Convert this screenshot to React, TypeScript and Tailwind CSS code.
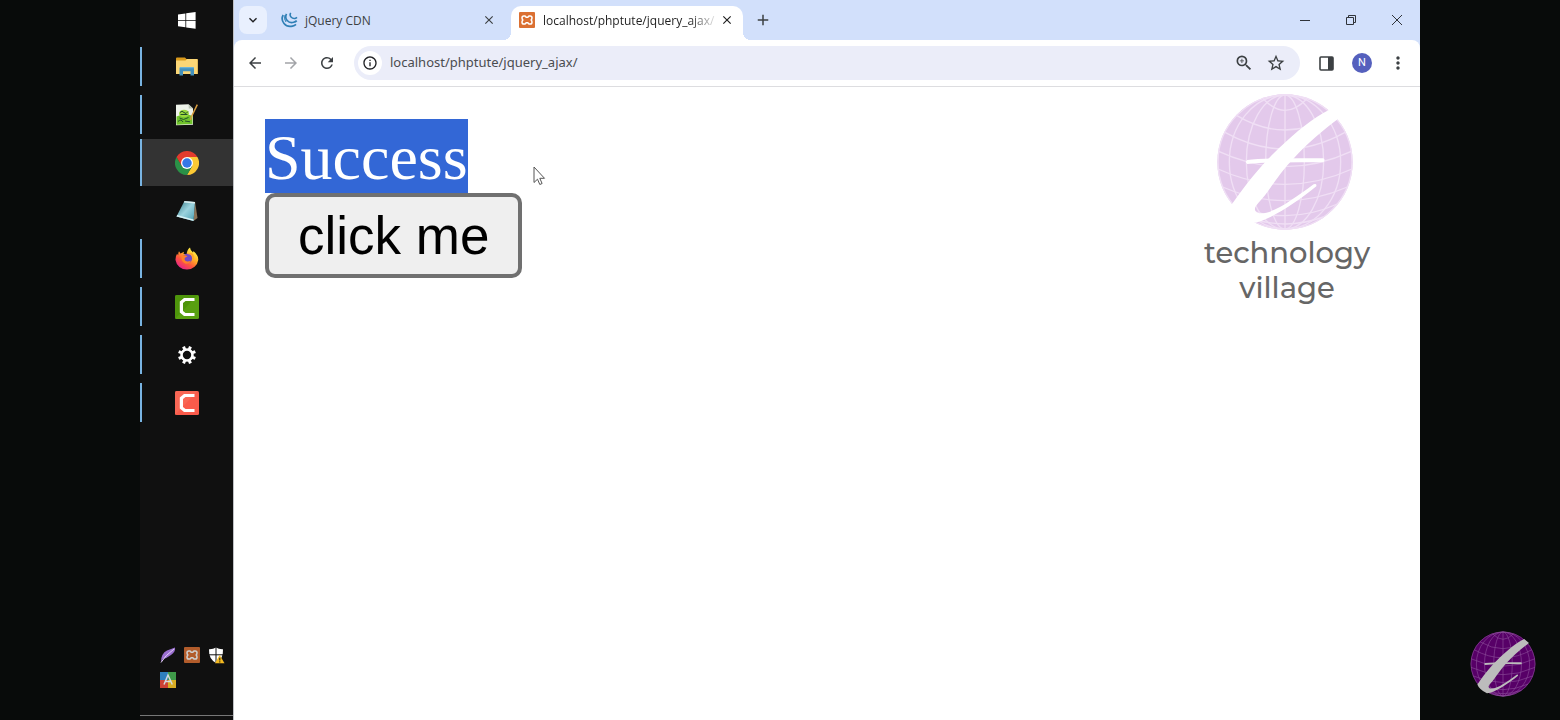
import type { ReactNode } from "react";
import {
  MdAdd,
  MdArrowBack,
  MdArrowForward,
  MdClose,
  MdInfoOutline,
  MdKeyboardArrowDown,
  MdMoreVert,
  MdRefresh,
  MdStarBorder,
  MdZoomIn,
} from "react-icons/md";

function StartIcon() {
  return (
    <svg viewBox="0 0 18 17" className="h-[17px] w-[18px]" fill="#fff">
      <path d="M0 2.4 7.4 1.4v6.5H0zM8.2 1.3 17.6 0v7.9H8.2zM0 8.8h7.4v6.5L0 14.300zM8.2 8.800h9.400V16.700L8.200 15.400z" />
    </svg>
  );
}

function FolderIcon() {
  return (
    <svg viewBox="0 0 22 19" className="h-[19px] w-[22px]">
      <path d="M0 1.500Q0 .5 1 .5h8L10.500 2H21q.7 0 .7.700V17H0z" fill="#d99a1c" />
      <path d="M0 3.500h9.500L11 2h10q.7 0 .7.700V17H0z" fill="#fbd676" />
      <path d="M3.500 18.500v-7q0-1.500 1.500-1.500h11.500q1.500 0 1.500 1.500v7h-3.500v-4.200H7v4.200z" fill="#4391bd" />
      <path d="M5 10h11.500q1.500 0 1.500 1.300H3.500Q3.600 10 5 10z" fill="#6bb3d8" />
    </svg>
  );
}

function EditorIcon() {
  return (
    <svg viewBox="0 0 23 22" className="h-[22px] w-[23px]">
      <path d="M1 .7 13.500.3 18 4.500v16.300L1 21.300z" fill="#eef3ea" />
      <path d="m13.500.3.300 4.200 4.200 0z" fill="#b9c4b4" />
      <path d="M1.500 12.500q8-3.500 16-.5v8l-16 .7z" fill="#6fc22b" />
      <ellipse cx="9" cy="9.500" rx="5" ry="3.800" fill="#9bd93f" />
      <path d="M5 8.500q2-2.500 4 0t4-1M5.500 10.500h7M4.500 14l4 1.500 5-2M3 17.500q3-3 5 .5M10 17l5 .800" fill="none" stroke="#22502a" strokeWidth="1" />
      <path d="m22.300.7-6 12.300-.8 3" fill="none" stroke="#d79c3f" strokeWidth="1.500" />
    </svg>
  );
}

function ChromeIcon() {
  return (
    <svg viewBox="0 0 48 48" className="size-6">
      <path d="M24 12h20.800A24 24 0 0 1 24 48l10.400-18z" fill="#fcc934" />
      <path d="M13.600 30 3.200 12A24 24 0 0 0 24 48l10.400-18z" fill="#2a9147" />
      <path d="M24 12h20.800A24 24 0 0 0 3.200 12l10.400 18z" fill="#e33b2e" />
      <circle cx="24" cy="24" r="12" fill="#fff" />
      <circle cx="24" cy="24" r="9.500" fill="#3478e5" />
    </svg>
  );
}

function NotepadIcon() {
  return (
    <svg viewBox="0 0 22 22" className="size-[22px]">
      <defs>
        <linearGradient id="pad" x1="0" y1="0" x2="1" y2="1">
          <stop offset="0" stopColor="#2b7482" />
          <stop offset=".5" stopColor="#9bd3de" />
          <stop offset="1" stopColor="#4ba0b4" />
        </linearGradient>
      </defs>
      <path d="m19 1.500 2.500 16.500-4 3z" fill="#8a7357" />
      <path d="M8.500 1 19 2l-1.500 19L.5 16.500z" fill="url(#pad)" />
      <path d="M8.500 1 19 2v1.500L7.800 2.500z" fill="#dceef0" />
      <path d="M.5 16.500 17.500 21l.2-1.500L1.200 15z" fill="#d5f1f5" />
    </svg>
  );
}

function FirefoxIcon() {
  return (
    <svg viewBox="0 0 24 24" className="size-6">
      <defs>
        <linearGradient id="fox" x1=".8" y1=".1" x2=".2" y2=".95">
          <stop offset="0" stopColor="#fff24a" />
          <stop offset=".35" stopColor="#ffad26" />
          <stop offset=".65" stopColor="#ff563c" />
          <stop offset="1" stopColor="#e4208e" />
        </linearGradient>
      </defs>
      <path
        d="M4 4.200 5.500 6.500 9 4.800l-.5 2.300h3.200Q11.800 3 15 .5q.2 3 3 5 .5-.7.3-1.600 4.800 3.500 5 8.800A11.500 11.200 0 0 1 .5 13Q.4 8.500 2.300 6.800 2.500 8 3.300 8.300 3 6 4 4.200z"
        fill="url(#fox)"
      />
      <circle cx="12.300" cy="11.500" r="4.800" fill="#7049c7" />
      <path d="M6.500 9q3-1.800 6 .2l-2.800 1.800q-.5 3 2.500 3.500 2 .2 3.800-1-1.500 4-5.500 3.200Q6 15 6.500 9z" fill="#ff8129" />
      <path d="M12.500 7.500q4-.8 5 2.500.8 3-1 5.500 4-4 1.500-8.500-2-2-5.500.5z" fill="#ffa42b" />
    </svg>
  );
}

function CamtasiaIcon({ red = false }: { red?: boolean }) {
  return (
    <svg viewBox="0 0 24 24" className="size-6">
      <rect width="24" height="24" rx="1.500" fill={red ? "#fa5b4b" : "#58a010"} />
      <path d="M0 24V1.500Q0 0 1.500 0h21L0 24z" fill={red ? "#f9705c" : "#478e08"} opacity=".6" />
      <path d="M19.500 3v3h-9L8 8v8l2.500 2h9v3H9l-4.200-3.500v-11L9 3z" fill="#fff" />
    </svg>
  );
}

function SettingsIcon() {
  return (
    <svg viewBox="-10 -10 20 20" className="size-5" fill="none" stroke="#fff">
      <circle r="5.500" strokeWidth="2.600" />
      <g strokeWidth="3">
        <path d="M0-9V-6M0 9V6M-9 0h3M9 0H6" transform="rotate(22.500)" />
        <path d="M0-9V-6M0 9V6M-9 0h3M9 0H6" transform="rotate(67.500)" />
      </g>
    </svg>
  );
}

function XamppIcon() {
  return (
    <svg viewBox="0 0 16 16" className="size-4">
      <rect width="16" height="16" rx="1" fill="#db7032" />
      <path
        d="M4.800 4h1.200L7.200 5.200h1.600L10 4h1.200q1.800 0 1.800 1.800 0 1.200-.8 2.200.8 1 .8 2.200 0 1.800-1.800 1.800H10L8.800 10.800H7.200L6 12H4.800Q3 12 3 10.200 3 9 3.800 8 3 7 3 5.800 3 4 4.800 4z"
        fill="none"
        stroke="#fff"
        strokeWidth="1.500"
      />
    </svg>
  );
}

function JQueryIcon() {
  return (
    <svg viewBox="0 0 17 16" className="h-4 w-[17px]" fill="none" stroke="#2f7fb5">
      <path d="M2.200 3Q-.3 7.500 3 11.500t8.500 2.600q2-.4 3.500-1.800" strokeWidth="1.700" />
      <path d="M5.500 1.800Q3.600 5.500 6.200 8.500t6.500 1.800q2-.5 3-1.700" strokeWidth="1.700" />
      <path d="M9.700.8Q8.300 3 10 4.900t4 1.500q1.200-.2 2-1" strokeWidth="1.500" />
      <path d="M4 3Q2.500 7 5 10" strokeWidth="1" />
    </svg>
  );
}

function FeatherIcon() {
  return (
    <svg viewBox="0 0 16 16" className="size-4">
      <path d="M1 15Q1 6.500 7 3.500 11 1.800 15 .5q.8 4-4 7.500-4 3-8 4z" fill="#9a6fd0" />
      <path d="M1 15.500Q5 8.500 14 2" fill="none" stroke="#e2d2f4" strokeWidth="1" />
    </svg>
  );
}

function ShieldIcon() {
  return (
    <svg viewBox="0 0 17 17" className="size-[17px]">
      <path d="M8 .5q3 2 7 1.800Q15.500 12 8 16 .5 12 1 2.300 5 2.500 8 .5z" fill="#fff" />
      <path d="M8 0v16M0 7.800h16" stroke="#111" strokeWidth="1" />
      <path d="m11.700 8 4.800 8.200H7z" fill="#f3b921" />
      <path d="M11.800 10.800v2.800M11.800 14.300v1.200" stroke="#2c2309" strokeWidth="1.100" />
    </svg>
  );
}

function PaletteIcon() {
  return (
    <svg viewBox="0 0 16 16" className="size-4">
      <path d="M0 0h8v8H0z" fill="#2e7fbd" />
      <path d="M8 0h8v8H8z" fill="#3f9a49" />
      <path d="M0 8h8v8H0z" fill="#cc4135" />
      <path d="M8 8h8v8H8z" fill="#d8ac24" />
      <path d="m4 12.500 4-9.500 4.300 9.500M5.500 9.500h5" fill="none" stroke="#d3dade" strokeWidth="1.500" />
    </svg>
  );
}

function Globe({ className, fill, line, mark }: { className: string; fill: string; line: string; mark: string }) {
  return (
    <svg viewBox="78 22 414 414" className={className}>
      <circle cx="285" cy="229" r="203" fill={fill} />
      <g fill="none" stroke={line} strokeWidth="4">
        <circle cx="285" cy="229" r="201" />
        <path d="M285 28v402" />
        <ellipse cx="285" cy="229" rx="58" ry="201" />
        <ellipse cx="285" cy="229" rx="116" ry="201" />
        <ellipse cx="285" cy="229" rx="167" ry="201" />
        <path d="M220 40Q285 108 350 40M141 90Q285 176 429 90M105 140Q285 240 465 140M86 197Q285 289 484 197M84 250Q285 342 486 250M98 304Q285 386 472 304M128 355Q285 425 442 355M170 394Q285 436 400 394" />
      </g>
      <path
        d="M418 72C370 95 320 137 265 189C225 227 175 284 124 358Q136 390 184 413C240 405 320 350 379 302Q381 293 371 296C310 340 245 390 205 382C180 372 206 353 225 329C250 295 275 255 310 219C350 175 400 133 448 97Z"
        fill={mark}
      />
      <path d="M172 223Q230 216 400 218 407 223 400 230 240 228 172 235 163 229 172 223Z" fill={mark} />
    </svg>
  );
}

function TaskItem({ label, running = true, active = false, children }: { label: string; running?: boolean; active?: boolean; children: ReactNode }) {
  return (
    <button
      type="button"
      aria-label={label}
      className={`flex h-[47px] w-full items-center ${active ? "bg-[#333333]" : ""}`}
    >
      <span className={`w-0.5 ${active ? "h-full" : "h-[39px]"} ${running ? "bg-[#79b4e2]" : ""}`} />
      <span className="flex flex-1 justify-center pr-0.5">{children}</span>
    </button>
  );
}

function Taskbar() {
  return (
    <nav aria-label="Taskbar" className="flex w-[93px] shrink-0 flex-col bg-[#101010]">
      <button type="button" aria-label="Start" className="mb-[3px] flex h-10 items-center justify-center">
        <StartIcon />
      </button>
      <div className="flex flex-col gap-px">
        <TaskItem label="File Explorer"><FolderIcon /></TaskItem>
        <TaskItem label="Notepad++"><EditorIcon /></TaskItem>
        <TaskItem label="Chrome" active><ChromeIcon /></TaskItem>
        <TaskItem label="Notepad" running={false}><NotepadIcon /></TaskItem>
        <TaskItem label="Firefox"><FirefoxIcon /></TaskItem>
        <TaskItem label="Camtasia"><CamtasiaIcon /></TaskItem>
        <TaskItem label="Settings"><SettingsIcon /></TaskItem>
        <TaskItem label="Recorder"><CamtasiaIcon red /></TaskItem>
      </div>
      <div className="mt-auto mb-[27px] grid grid-cols-[16px_16px_16px] gap-2 pl-5">
        <FeatherIcon />
        <div className="opacity-80"><XamppIcon /></div>
        <ShieldIcon />
        <PaletteIcon />
      </div>
      <div className="mb-1 h-px bg-[#777777]" />
    </nav>
  );
}

function IconButton({ label, className, children }: { label: string; className: string; children: ReactNode }) {
  return (
    <button type="button" aria-label={label} className={`flex shrink-0 items-center justify-center ${className}`}>
      {children}
    </button>
  );
}

function TabStrip() {
  return (
    <header className="flex h-10 items-end bg-[#d2e0fb] text-[#3c4043]">
      <IconButton label="Search tabs" className="mb-1.5 ml-[5px] size-7 rounded-lg bg-[#e9f0fe] text-[#202124]">
        <MdKeyboardArrowDown className="size-4" />
      </IconButton>
      <div className="ml-1.5 flex h-[34px] w-[238px] items-center pr-2.5 pb-1.5 pl-2">
        <JQueryIcon />
        <span className="ml-[7px] flex-1 pt-0.5 text-[12px] font-medium">jQuery CDN</span>
        <IconButton label="Close tab" className="size-6"><MdClose className="size-3.5" /></IconButton>
      </div>
      <div className="relative flex h-[34px] w-[232px] items-center rounded-t-[10px] bg-white pr-1 pb-1.5 pl-2 text-[#1f1f1f]">
        <span className="absolute bottom-0 -left-2 size-2 bg-[radial-gradient(circle_at_0_0,transparent_8px,white_8px)]" />
        <span className="absolute -right-2 bottom-0 size-2 bg-[radial-gradient(circle_at_100%_0,transparent_8px,white_8px)]" />
        <XamppIcon />
        <span className="ml-2 flex-1 pt-0.5 text-[12px] font-medium whitespace-nowrap [mask-image:linear-gradient(to_right,black_85%,transparent_102%)]">
          localhost/phptute/jquery_ajax/
        </span>
        <IconButton label="Close tab" className="size-6"><MdClose className="size-3.5" /></IconButton>
      </div>
      <IconButton label="New tab" className="mb-1.5 ml-1.5 size-7"><MdAdd className="size-[18px]" /></IconButton>
      <div className="ml-auto flex h-10 text-[#30343a]">
        <IconButton label="Minimize" className="w-[46px]">
          <svg viewBox="0 0 10 10" className="size-2.5" stroke="currentColor"><path d="M0 5.500h10" /></svg>
        </IconButton>
        <IconButton label="Restore" className="w-[46px]">
          <svg viewBox="0 0 12 12" className="size-3" fill="none" stroke="currentColor">
            <path d="M1.500 3.500h7v7h-7zM3.500 3.500v-2h7v7h-2" />
          </svg>
        </IconButton>
        <IconButton label="Close" className="w-[46px]">
          <svg viewBox="0 0 12 12" className="size-3" stroke="currentColor"><path d="m1 1 10 10M11 1 1 11" /></svg>
        </IconButton>
      </div>
    </header>
  );
}

function Toolbar() {
  return (
    <div className="bg-[#d2e0fb]">
      <div className="flex h-[47px] items-center rounded-t-lg border-b border-[#dddde0] bg-white pr-1 pl-[3px] text-[#3c4043]">
        <IconButton label="Back" className="w-9"><MdArrowBack className="size-[18px]" /></IconButton>
        <IconButton label="Forward" className="w-9 text-[#a2a4a8]"><MdArrowForward className="size-[18px]" /></IconButton>
        <IconButton label="Reload" className="w-9"><MdRefresh className="size-[18px]" /></IconButton>
        <div className="mr-2 ml-[9px] flex h-[34px] min-w-0 flex-1 items-center rounded-full bg-[#ebedf9] pr-2 pl-1">
          <IconButton label="Site information" className="size-6 rounded-full bg-white text-[#202124]">
            <MdInfoOutline className="size-4" />
          </IconButton>
          <input
            aria-label="Address"
            defaultValue="localhost/phptute/jquery_ajax/"
            className="ml-2 min-w-0 flex-1 bg-transparent font-['Noto_Sans',sans-serif] text-[13px] text-[#4a4c50] outline-none"
          />
          <IconButton label="Zoom" className="w-8"><MdZoomIn className="size-5" /></IconButton>
          <IconButton label="Bookmark" className="w-8"><MdStarBorder className="size-5" /></IconButton>
        </div>
        <IconButton label="Side panel" className="w-9">
          <svg viewBox="0 0 15 15" className="size-[15px]">
            <rect x="1" y="1" width="13" height="13" rx="1" fill="none" stroke="currentColor" strokeWidth="1.600" />
            <path d="M9 1h5v13H9z" fill="currentColor" />
          </svg>
        </IconButton>
        <IconButton label="Profile" className="w-9">
          <span className="flex size-5 items-center justify-center rounded-full bg-[#5560bd] font-[Roboto] text-[11px] text-white">N</span>
        </IconButton>
        <IconButton label="Menu" className="w-9"><MdMoreVert className="size-5" /></IconButton>
      </div>
    </div>
  );
}

export default function App() {
  return (
    <div className="flex h-screen min-h-[560px] overflow-hidden bg-[#080b0a] font-['Open_Sans','Noto_Sans',sans-serif]">
      <div className="w-35 shrink-0" />
      <Taskbar />
      <div className="flex min-w-0 flex-1 flex-col border-l border-[#bfc1c5] bg-white">
        <TabStrip />
        <Toolbar />
        <main className="relative flex flex-1 flex-col items-start py-8 pr-8 pl-[31px]">
          <p className="bg-[#3367d6] pt-1 font-['Liberation_Serif',serif] text-[64px] leading-[70px] text-white">Success</p>
          <button
            type="button"
            className="h-[85px] rounded-[10px] border-4 border-[#707070] bg-[#efefef] px-[29px] font-['Liberation_Sans',sans-serif] text-[53px] leading-[77px] text-black"
          >
            click me
          </button>
          <svg viewBox="0 0 13 20" className="absolute top-[79px] left-[299px] h-5 w-[13px]">
            <path d="M1 1v15.500l3.500-3.300 2.300 5.300 2.300-1-2.300-5.200h4.700z" fill="#fff" stroke="#555" strokeWidth="1" />
          </svg>
          <div className="absolute top-1.5 right-[34px] flex w-[202px] flex-col items-center">
            <Globe className="size-[138px]" fill="#e3c9eb" line="#f0dff5" mark="#ffffff" />
            <p className="mt-1 pl-1 text-center font-['Montserrat','Inter',sans-serif] text-[29px] leading-[35px] font-medium text-[#666666]">
              technology
              <br />
              village
            </p>
          </div>
        </main>
      </div>
      <aside className="flex w-35 shrink-0 items-end justify-end pr-6 pb-[23px]">
        <Globe className="size-[66px]" fill="#570067" line="#8b4b98" mark="#bcbcbc" />
      </aside>
    </div>
  );
}
